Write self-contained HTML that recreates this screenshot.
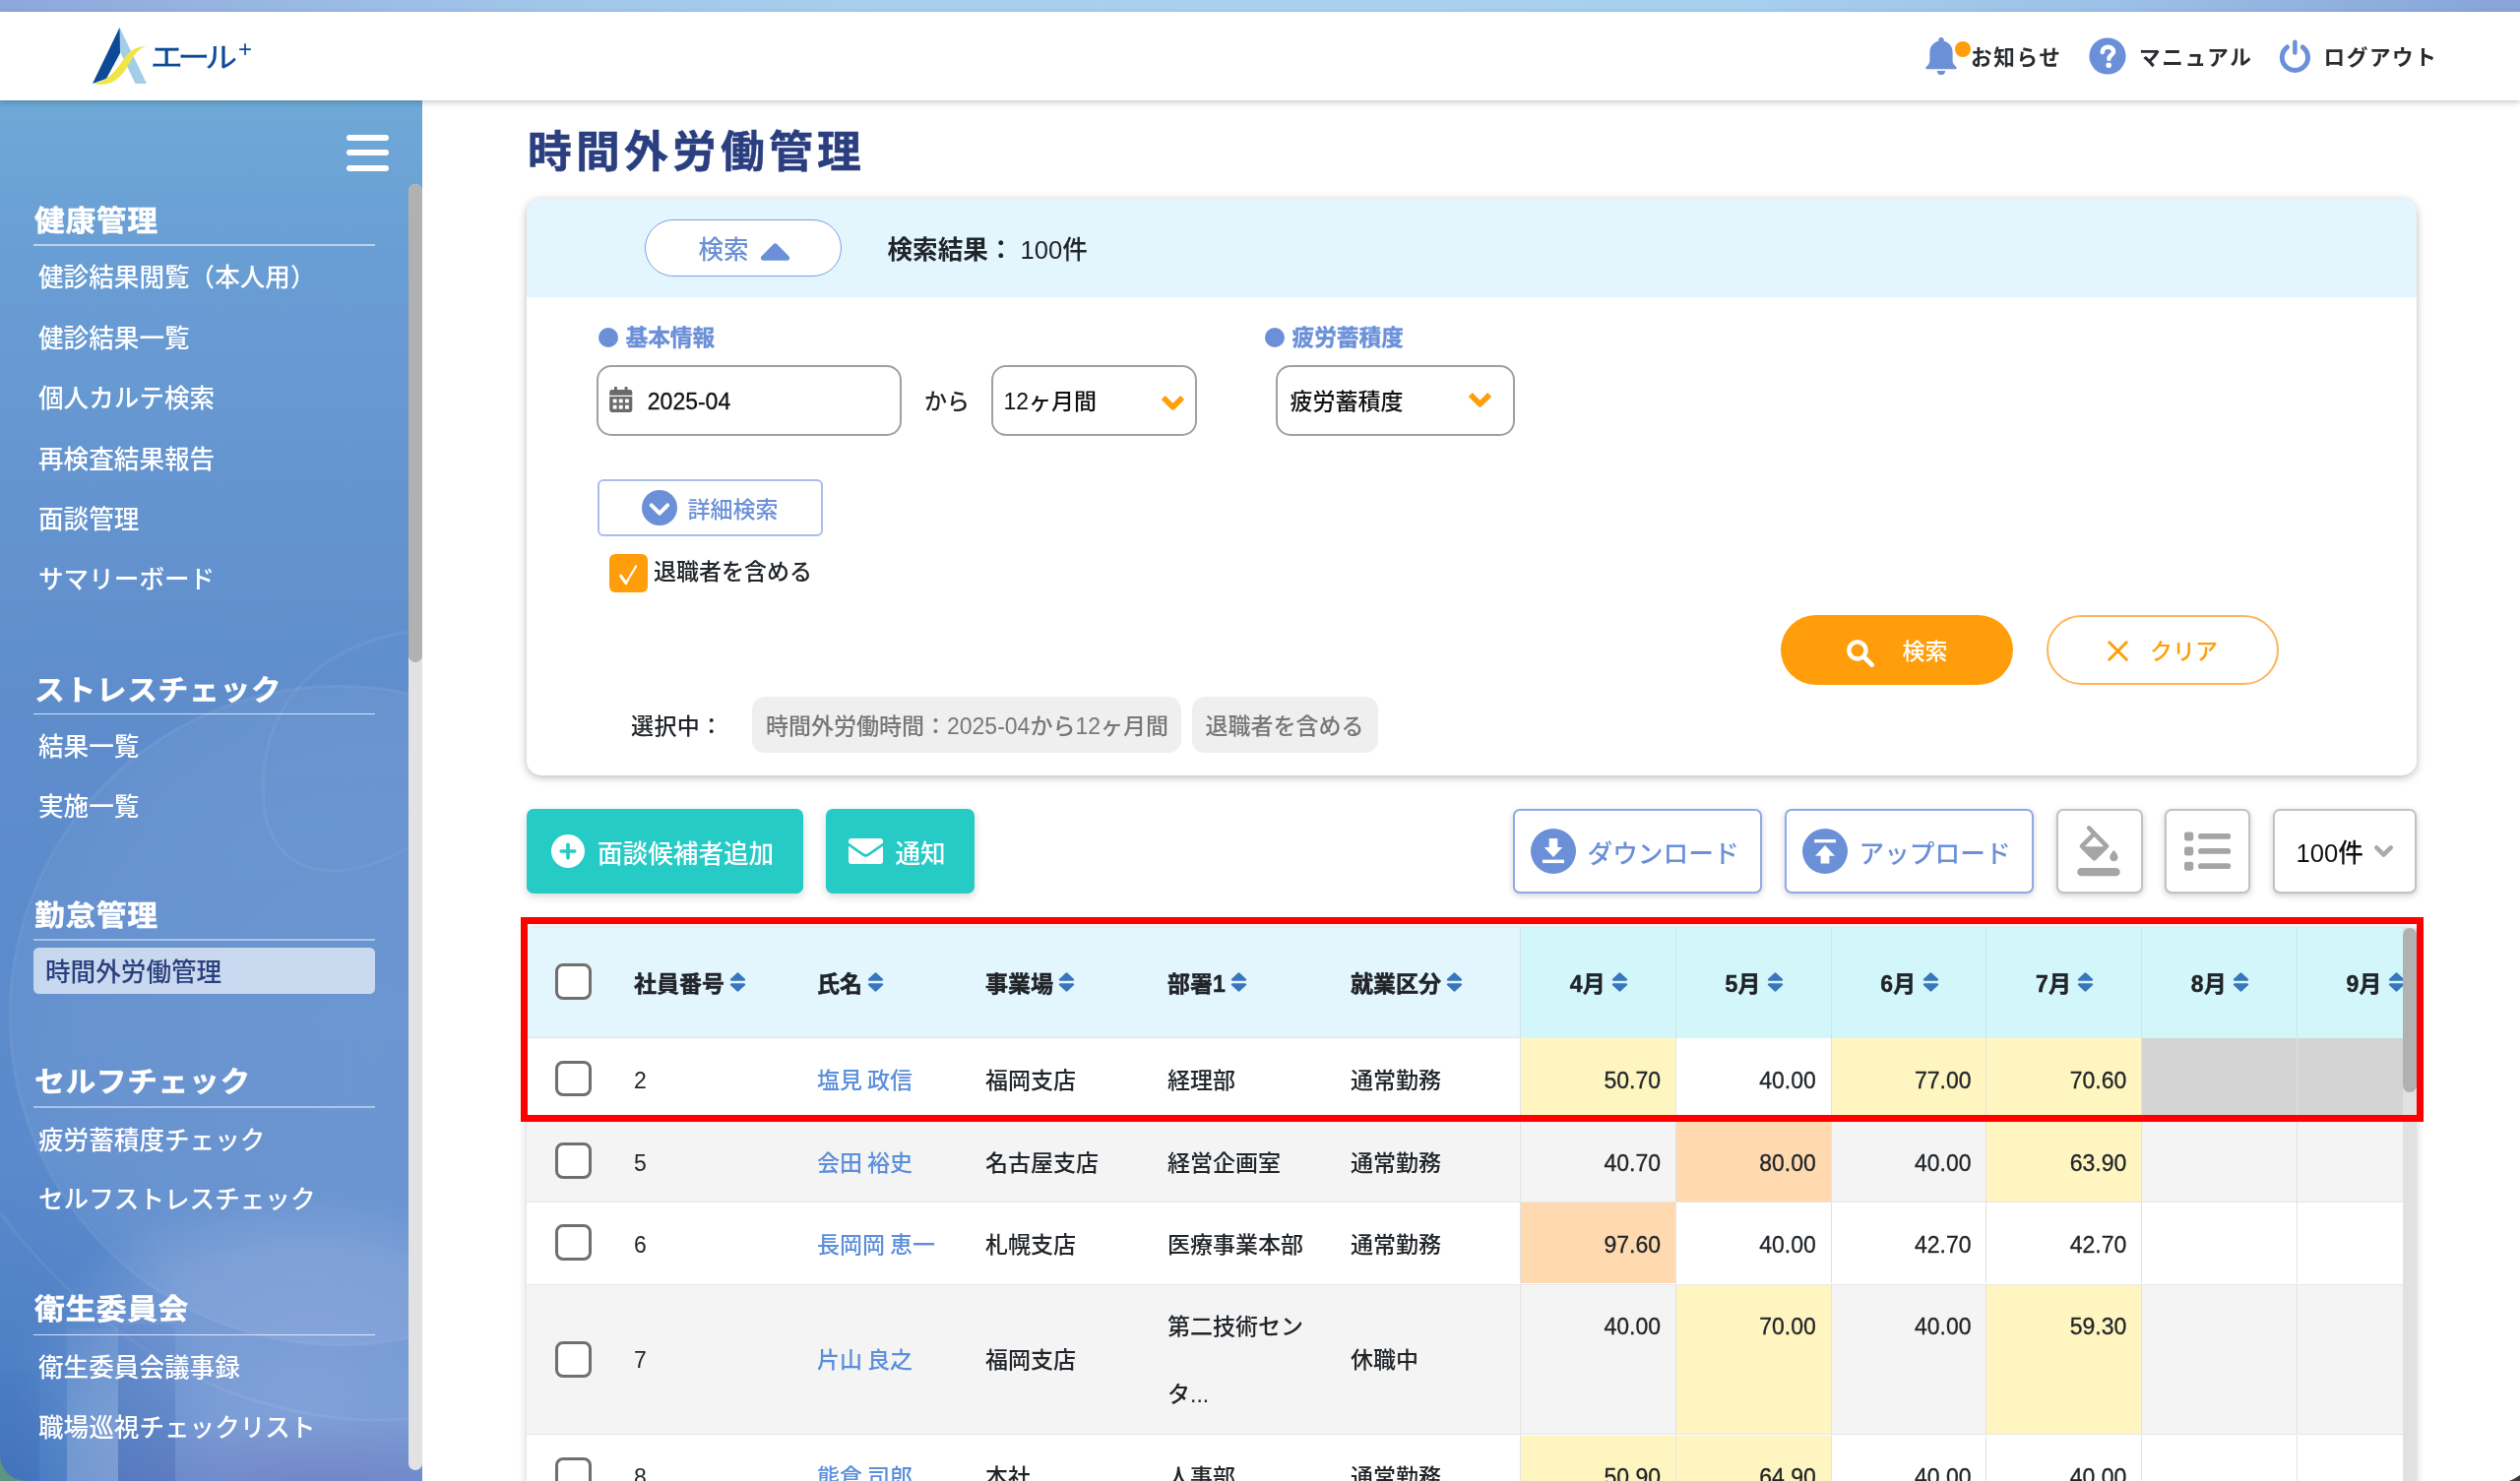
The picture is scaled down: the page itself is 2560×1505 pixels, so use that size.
<!DOCTYPE html>
<html lang="ja">
<head>
<meta charset="utf-8">
<title>時間外労働管理</title>
<style>
*{box-sizing:border-box;margin:0;padding:0}
html,body{width:2560px;height:1505px;overflow:hidden;background:#fff}
body{position:relative;font-family:"Liberation Sans","Noto Sans CJK JP",sans-serif;font-size:23px;font-weight:500;color:#212529;-webkit-font-smoothing:antialiased}
#app{position:absolute;left:0;top:0;width:2560px;height:1505px;overflow:hidden;will-change:transform}
.abs{position:absolute}
svg{display:block}
/* top strip */
#strip{position:absolute;left:0;top:0;width:2560px;height:12px;background:linear-gradient(90deg,#8da7dc 0%,#98b6e2 10%,#a2c6ea 22%,#a8d0ee 36%,#a9d1ef 55%,#a6ceee 70%,#9dc0e7 84%,#90afde 93%,#88a4d8 100%)}
/* header */
#header{position:absolute;left:0;top:12px;width:2560px;height:90px;background:#fff;box-shadow:0 2px 6px rgba(0,0,0,.22);z-index:5}
#logo{position:absolute;left:94px;top:16px}
#logotext{position:absolute;left:153px;top:25px;width:110px;height:44px;font-size:29px;font-weight:400;-webkit-text-stroke:.3px #0d4a96;line-height:44px;color:#0d4a96;white-space:nowrap}
#logotext span{position:absolute;left:0;top:0;display:block;transform-origin:0 50%;transform:scaleX(1.13);letter-spacing:-4.6px}
#logotext sup{position:absolute;left:89px;top:-2.2px;font-size:24px;font-weight:400;line-height:30px;-webkit-text-stroke:0}
.hnav{position:absolute;top:2px;height:90px;line-height:90px;font-size:21.6px;font-weight:700;color:#2a2d30;white-space:nowrap;letter-spacing:1.6px}
/* sidebar */
#side{position:absolute;left:0;top:102px;width:429px;height:1403px;overflow:hidden;color:#fff;
 background:linear-gradient(180deg,#6fa9d7 0%,#699ed4 11%,#6595d0 27%,#5f8dcc 44%,#5c8bcc 58%,#5b8acc 100%)}
#side .bgsvg{position:absolute;left:0;top:0}
#burger{position:absolute;left:352px;top:35px;width:43px;height:37px}
#burger i{position:absolute;left:0;width:43px;height:6px;border-radius:3px;background:#fff}
.sh{position:absolute;left:35px;font-size:30.8px;font-weight:700;-webkit-text-stroke:.4px #fff;line-height:39px;white-space:nowrap;letter-spacing:.6px;transform:scaleY(.945);transform-origin:0 55%}
.sl{position:absolute;left:34px;margin-top:-1px;width:347px;height:2px;background:rgba(255,255,255,.55)}
.si{position:absolute;left:39px;font-size:25.6px;line-height:40px;white-space:nowrap;font-weight:500}
.si.act{left:34px;width:347px;height:47px;line-height:50.5px;padding-left:12px;background:rgba(255,255,255,.64);color:#2a3f7d;border-radius:5.5px}
#strack{position:absolute;left:415px;top:85px;width:14px;height:1307px;background:#e2e2e2;border-radius:7px}
#sthumb{position:absolute;left:0;top:0;width:14px;height:486px;background:#b1b1b1;border-radius:7px}
/* main */
#title{position:absolute;left:536px;top:118px;font-size:44.8px;font-weight:700;line-height:72px;color:#2b3f80;-webkit-text-stroke:.5px #2b3f80;letter-spacing:4.2px;white-space:nowrap}
#card{position:absolute;left:535px;top:202px;width:1920px;height:586px;border-radius:15px;background:#fff;box-shadow:0 2px 9px rgba(0,0,0,.28)}
#cardhead{position:absolute;left:0;top:0;width:1920px;height:100px;background:#e3f5fd;border-radius:15px 15px 0 0}
#toggle{position:absolute;left:120px;top:21px;width:200px;height:58px;border:1.5px solid #7d9fe2;border-radius:29px;background:#fff}
#toggle span{position:absolute;left:53.5px;top:2px;line-height:56px;font-size:25.6px;color:#6b90d8}
#toggle svg{position:absolute;left:115.5px;top:23px}
#result{position:absolute;left:366.5px;top:23px;line-height:58px;font-size:25.6px;font-weight:700;color:#212529;white-space:nowrap}
#result b{font-weight:500}
.lab{position:absolute;font-size:22.7px;font-weight:700;color:#6b90d8;-webkit-text-stroke:.35px #6b90d8;line-height:30px;white-space:nowrap}
.lab i{position:absolute;left:-27.2px;top:5px;width:20px;height:20px;border-radius:50%;background:#6b90d8}
.inp{position:absolute;top:169px;height:71.5px;border:2px solid #a0a0a0;border-radius:15px;background:#fff;font-size:23px;line-height:72.5px;color:#111;white-space:nowrap}
.chip{position:absolute;top:506px;height:56.6px;line-height:61px;border-radius:13px;background:#efefef;color:#777;font-size:23px;padding:0 14px;white-space:nowrap}
.pill{position:absolute;top:423px;width:236px;height:71px;border-radius:36px;font-size:23px;line-height:71px;white-space:nowrap}
/* toolbar */
.tb{position:absolute;top:822px;height:86px;border-radius:7px;white-space:nowrap;font-size:25.6px;line-height:85px}
.teal{background:#26cbc6;color:#fff;font-weight:500;box-shadow:0 3px 8px rgba(0,0,0,.16)}
.outl{background:#fff;border:2px solid #8faae7;color:#6b90d8;box-shadow:0 2px 6px rgba(0,0,0,.18)}
.gry{background:#fff;border:2px solid #c2c2c2;color:#111;box-shadow:0 2px 6px rgba(0,0,0,.2)}
/* table */
#tbl{position:absolute;left:535px;top:943px;width:1920px;height:600px;background:#fff;box-shadow:0 0 9px rgba(0,0,0,.2);border-radius:6px 0 0 0;overflow:hidden}
.row{position:absolute;left:0;width:1906px;border-bottom:1.5px solid #e6e6e6}
.row.alt{background:#f4f4f4}
.row.hd{background:#e3f5fd;font-weight:700;color:#212529;-webkit-text-stroke:.45px #212529;border-bottom:1.5px solid #e0e6ea}
.c{position:absolute;top:0;height:100%;white-space:nowrap}
.t{position:absolute;left:0;line-height:40px;white-space:nowrap}
.m{position:absolute;top:0;width:158px;border-left:1.5px solid #e2e2e2}
.row.hd .m{background:#d3f6fa;border-left:1.5px solid #cfe3e6}
.m .v{position:absolute;right:15px;line-height:40px;color:#212529;-webkit-text-stroke:.3px #212529}
.num{-webkit-text-stroke:.3px currentColor}
.m .h{position:absolute;left:1px;width:100%;text-align:center;line-height:40px;padding-right:0}
.y{background:#fff5c0}.o{background:#ffdab0}.g{background:#d4d4d4}
.cb{position:absolute;left:29px;width:36.5px;height:36.5px;border:3px solid #6f6f6f;border-radius:8px;background:#fff}
a.n{color:#5b8edb;text-decoration:none;word-spacing:-1.3px}
.so{display:inline-block;vertical-align:middle;margin-left:5px;position:relative;top:-3.5px}
.m .so{margin-left:6.5px}
#ttrack{position:absolute;left:1906px;top:0;width:14px;height:600px;background:#e1e1e1}
#tthumb{position:absolute;left:0;top:0;width:14px;height:167px;background:#b1b1b1;border-radius:7px}
#red{position:absolute;left:529px;top:932px;width:1933px;height:208px;border:7px solid #ff0000;z-index:9}
</style>
</head>
<body>
<div id="app">
<div id="strip"></div>

<div id="header">
  <svg id="logo" width="56" height="60" viewBox="0 0 56 60">
    <path d="M27.5 0 L55 57 L43.5 57 L22 12 Z" fill="#a3cde8"/>
    <path d="M27.5 0 L28 26 L14 52 L0 57 Z" fill="#0d4a96"/>
    <path d="M1 57 C14 55 24 44 31 33 C36 25 42 19.5 54.5 19 C46 22 42 28 37 37 C30 50 20 61 1 57 Z" fill="#f0e545"/>
  </svg>
  <div id="logotext"><span>エール</span><sup>+</sup></div>

  <svg class="abs" style="left:1956px;top:26px" width="32" height="38" viewBox="0 0 32 38">
    <path d="M16 0 a2.7 2.7 0 0 1 2.7 2.7 v1.1 C24 5 27.6 9.6 27.6 15 v8.5 c0 2.6 1.3 4.5 3.7 6.6 c.9 .8 .4 2.2 -1 2.2 H1.7 c-1.4 0 -1.9 -1.4 -1 -2.2 C3.1 28 4.4 26.1 4.4 23.5 V15 C4.4 9.6 8 5 13.3 3.8 V2.7 A2.7 2.7 0 0 1 16 0 Z" fill="#6b90d8"/>
    <path d="M11.800 34 h8.400 a4.200 4.200 0 0 1 -8.400 0 Z" fill="#6b90d8"/>
  </svg>
  <div class="abs" style="left:1986px;top:29.500px;width:16px;height:16px;border-radius:50%;background:#ff9e0a"></div>
  <div class="hnav" style="left:2002px">お知らせ</div>

  <svg class="abs" style="left:2121.5px;top:25.5px" width="38" height="38" viewBox="0 0 38 38">
    <circle cx="19" cy="19" r="18.600" fill="#6b90d8"/>
    <path d="M13.8 15 C13.8 11.6 16.2 9.7 19.4 9.7 C22.6 9.7 25 11.5 25 14.4 C25 18.2 20.4 18 20.4 21.8" fill="none" stroke="#fff" stroke-width="4.5" stroke-linecap="round"/>
    <circle cx="20.2" cy="28.3" r="2.8" fill="#fff"/>
  </svg>
  <div class="hnav" style="left:2173px">マニュアル</div>

  <svg class="abs" style="left:2315px;top:27px" width="33" height="36" viewBox="0 0 33 36">
    <path d="M8.5 8.9 A13.1 13.1 0 1 0 24.3 8.9" fill="none" stroke="#6b90d8" stroke-width="5" stroke-linecap="round"/>
    <path d="M16.4 3.8 V14.4" fill="none" stroke="#6b90d8" stroke-width="4.5" stroke-linecap="round"/>
  </svg>
  <div class="hnav" style="left:2360.5px">ログアウト</div>
</div>

<div id="side">
  <svg class="bgsvg" width="429" height="1403" viewBox="0 0 429 1403">
    <defs>
      <radialGradient id="gl" cx="55%" cy="55%" r="60%">
        <stop offset="0" stop-color="#fff" stop-opacity=".1"/>
        <stop offset=".75" stop-color="#fff" stop-opacity=".07"/>
        <stop offset="1" stop-color="#fff" stop-opacity=".035"/>
      </radialGradient>
      <radialGradient id="g2" cx="50%" cy="50%" r="50%">
        <stop offset="0" stop-color="#c9cdf0" stop-opacity=".34"/>
        <stop offset=".7" stop-color="#c9cdf0" stop-opacity=".22"/>
        <stop offset="1" stop-color="#c9cdf0" stop-opacity="0"/>
      </radialGradient>
      <radialGradient id="pu" cx="50%" cy="50%" r="50%">
        <stop offset="0" stop-color="#6c6bb3" stop-opacity=".5"/>
        <stop offset="1" stop-color="#6c6bb3" stop-opacity="0"/>
      </radialGradient>
      <radialGradient id="dk" cx="50%" cy="50%" r="50%">
        <stop offset="0" stop-color="#2f6ab8" stop-opacity=".5"/>
        <stop offset="1" stop-color="#2f6ab8" stop-opacity="0"/>
      </radialGradient>
      <linearGradient id="b1" x1="0" y1="0" x2="0" y2="1">
        <stop offset="0" stop-color="#fff" stop-opacity=".04"/>
        <stop offset="1" stop-color="#fff" stop-opacity=".2"/>
      </linearGradient>
      <linearGradient id="b2" x1="0" y1="0" x2="0" y2="1">
        <stop offset="0" stop-color="#3f64b0" stop-opacity=".1"/>
        <stop offset="1" stop-color="#3f64b0" stop-opacity=".42"/>
      </linearGradient>
    </defs>
    <circle cx="345" cy="930" r="335" fill="url(#gl)"/>
    <circle cx="345" cy="930" r="335" fill="none" stroke="#fff" stroke-opacity=".06" stroke-width="3"/>
    <path d="M414 540 C300 560 255 640 270 730 C290 800 360 790 414 760" fill="none" stroke="#fff" stroke-opacity=".06" stroke-width="3"/>
    <ellipse cx="310" cy="1320" rx="300" ry="215" fill="url(#g2)"/>
    <path d="M0 1130 C120 1290 280 1350 414 1340" fill="none" stroke="#fff" stroke-opacity=".07" stroke-width="3"/>
    <ellipse cx="0" cy="1403" rx="230" ry="340" fill="url(#dk)"/>
    <rect x="68" y="1248" width="52" height="155" fill="url(#b1)"/>
    <rect x="120" y="1244" width="58" height="159" fill="url(#b2)"/>
    <rect x="0" y="1290" width="40" height="113" fill="url(#b2)" opacity=".8"/>
    <ellipse cx="330" cy="1410" rx="300" ry="75" fill="url(#pu)"/>
  </svg>
  <div id="burger"><i style="top:0"></i><i style="top:15px"></i><i style="top:30.500px"></i></div>

  <div class="sh" style="top:103px">健康管理</div>
  <div class="sl" style="top:147px"></div>
  <div class="si" style="top:160px">健診結果閲覧（本人用）</div>
  <div class="si" style="top:221.500px">健診結果一覧</div>
  <div class="si" style="top:283px">個人カルテ検索</div>
  <div class="si" style="top:344.500px">再検査結果報告</div>
  <div class="si" style="top:405.500px">面談管理</div>
  <div class="si" style="top:466.500px">サマリーボード</div>

  <div class="sh" style="top:580px">ストレスチェック</div>
  <div class="sl" style="top:623.5px;height:1px;background:rgba(255,255,255,.75)"></div>
  <div class="si" style="top:637px">結果一覧</div>
  <div class="si" style="top:697.500px">実施一覧</div>

  <div class="sh" style="top:808.7px">勤怠管理</div>
  <div class="sl" style="top:853px;background:rgba(255,255,255,.45)"></div>
  <div class="si act" style="top:861px">時間外労働管理</div>

  <div class="sh" style="top:978px">セルフチェック</div>
  <div class="sl" style="top:1023px;background:rgba(255,255,255,.45)"></div>
  <div class="si" style="top:1036.500px">疲労蓄積度チェック</div>
  <div class="si" style="top:1097px">セルフストレスチェック</div>

  <div class="sh" style="top:1209px">衛生委員会</div>
  <div class="sl" style="top:1254.5px;height:1px;background:rgba(255,255,255,.75)"></div>
  <div class="si" style="top:1267.500px">衛生委員会議事録</div>
  <div class="si" style="top:1329px">職場巡視チェックリスト</div>

  <div id="strack"><div id="sthumb"></div></div>
</div>

<div id="title">時間外労働管理</div>

<div id="card">
  <div id="cardhead">
    <div id="toggle"><span>検索</span>
      <svg width="31" height="18" viewBox="0 0 31 19" preserveAspectRatio="none"><path d="M13.300 1.500 a3 3 0 0 1 4.400 0 L29.500 14.200 a2.800 2.800 0 0 1 -2.100 4.600 H3.600 a2.800 2.800 0 0 1 -2.100 -4.600 Z" fill="#6b90d8"/></svg>
    </div>
    <div id="result">検索結果： <b>100件</b></div>
  </div>

  <div class="lab" style="left:100.5px;top:126.2px"><i></i>基本情報</div>
  <div class="inp" style="left:71.3px;width:309.7px">
    <svg class="abs" style="left:11px;top:20px" width="23.5" height="26" viewBox="0 0 24 27">
      <path d="M5 0 h3 v3 h8 v-3 h3 v3 h2.500 a2.500 2.500 0 0 1 2.500 2.500 V9 H0 V5.500 A2.500 2.500 0 0 1 2.500 3 H5 Z M0 10.500 H24 V24.500 a2.500 2.500 0 0 1 -2.500 2.500 H2.500 A2.500 2.500 0 0 1 0 24.500 Z" fill="#6a6a6a"/>
      <g fill="#fff"><rect x="3.600" y="13" width="4" height="4"/><rect x="10" y="13" width="4" height="4"/><rect x="16.400" y="13" width="4" height="4"/><rect x="3.600" y="19.500" width="4" height="4"/><rect x="10" y="19.500" width="4" height="4"/><rect x="16.400" y="19.500" width="4" height="4"/></g>
    </svg>
    <span class="abs num" style="left:49.5px;top:-1.5px">2025-04</span>
  </div>
  <div class="abs" style="left:404px;top:169px;line-height:75.5px;font-size:23px">から</div>
  <div class="inp" style="left:472px;width:209px">
    <span class="abs" style="left:10.5px;top:-1.5px">12ヶ月間</span>
    <svg class="abs" style="left:170px;top:28px" width="25" height="17" viewBox="0 0 25 17"><path d="M2.8 3 L12.5 12.7 L22.2 3" fill="none" stroke="#ff9e0a" stroke-width="5.6" stroke-linejoin="round"/></svg>
  </div>

  <div class="lab" style="left:777.5px;top:126.2px"><i></i>疲労蓄積度</div>
  <div class="inp" style="left:761px;width:243px">
    <span class="abs" style="left:12.5px;top:-1.5px">疲労蓄積度</span>
    <svg class="abs" style="left:192.5px;top:25px" width="25" height="17" viewBox="0 0 25 17"><path d="M2.8 3 L12.5 12.7 L22.2 3" fill="none" stroke="#ff9e0a" stroke-width="5.6" stroke-linejoin="round"/></svg>
  </div>

  <div class="abs" style="left:71.5px;top:285px;width:229px;height:58px;border:2px solid #a9beea;border-radius:6px;background:#fff">
    <svg class="abs" style="left:43px;top:9px" width="36" height="36" viewBox="0 0 36 36"><circle cx="18" cy="18" r="18" fill="#6b90d8"/><path d="M9.800 15.400 L18 23.600 L26.200 15.400" fill="none" stroke="#fff" stroke-width="4" stroke-linecap="round" stroke-linejoin="round"/></svg>
    <span class="abs" style="left:90px;top:1px;line-height:57px;color:#6b90d8;white-space:nowrap">詳細検索</span>
  </div>

  <div class="abs" style="left:83.500px;top:360.5px;width:39.5px;height:39.5px;border-radius:6px;background:#ff9e0a">
    <svg width="40" height="40" viewBox="0 0 40 40"><path d="M11.600 22.200 L16.900 29.600 L27.200 12.300" fill="none" stroke="#fff" stroke-width="2.100" stroke-linecap="round" stroke-linejoin="round"/><path d="M11.600 22.200 L16.900 29.600" fill="none" stroke="#fff" stroke-width="3" stroke-linecap="round"/></svg>
  </div>
  <div class="abs" style="left:129px;top:360px;line-height:38px;white-space:nowrap">退職者を含める</div>

  <div class="pill" style="left:1274px;background:#ff9e0a;color:#fff;font-weight:500">
    <svg class="abs" style="left:66.5px;top:24.5px" width="28.5" height="28.5" viewBox="0 0 30 30"><circle cx="11.500" cy="11.500" r="9" fill="none" stroke="#fff" stroke-width="4.600"/><path d="M18.500 18.500 L27 27" stroke="#fff" stroke-width="5" stroke-linecap="round"/></svg>
    <span class="abs" style="left:123.5px;top:2px">検索</span>
  </div>
  <div class="pill" style="left:1544px;background:#fff;border:2px solid #ffb458;color:#ff9e0a;line-height:67px">
    <svg class="abs" style="left:59.5px;top:23.5px" width="21" height="21" viewBox="0 0 24 24"><path d="M2 2 L22 22 M22 2 L2 22" stroke="#ff9e0a" stroke-width="3.4" stroke-linecap="round"/></svg>
    <span class="abs" style="left:103px;top:2px">クリア</span>
  </div>

  <div class="abs" style="left:106px;top:508px;line-height:56px;white-space:nowrap;letter-spacing:.4px">選択中：</div>
  <div class="chip" style="left:229px;width:435.5px">時間外労働時間：2025-04から12ヶ月間</div>
  <div class="chip" style="left:675.5px">退職者を含める</div>
</div>

<!-- toolbar -->
<div class="tb teal" style="left:535px;width:280.6px">
  <svg class="abs" style="left:25px;top:26px" width="34" height="34" viewBox="0 0 34 34"><circle cx="17" cy="17" r="17" fill="#fff"/><path d="M17 10.3 V23.7 M10.3 17 H23.7" stroke="#26cbc6" stroke-width="3.7" stroke-linecap="round"/></svg>
  <span class="abs" style="left:72px;top:4.3px">面談候補者追加</span>
</div>
<div class="tb teal" style="left:838.5px;width:151.7px">
  <svg class="abs" style="left:23px;top:30px" width="35" height="26" viewBox="0 0 35 26"><path d="M3 0 H32 a3 3 0 0 1 3 3 V4.500 L19.600 15.200 a3.600 3.600 0 0 1 -4.200 0 L0 4.500 V3 A3 3 0 0 1 3 0 Z" fill="#fff"/><path d="M0 7.700 L14 17.400 a6 6 0 0 0 7 0 L35 7.700 V23 a3 3 0 0 1 -3 3 H3 a3 3 0 0 1 -3 -3 Z" fill="#fff"/></svg>
  <span class="abs" style="left:71px;top:4.3px">通知</span>
</div>

<div class="tb outl" style="left:1537px;width:253px">
  <svg class="abs" style="left:16px;top:18.4px" width="46" height="46" viewBox="0 0 46 46"><circle cx="23" cy="23" r="23" fill="#6b90d8"/><path d="M18.7 10.1 h8.6 v9 h5 L23 29.1 L13.7 19.1 h5 Z" fill="#fff"/><rect x="12" y="31.6" width="22" height="3.5" fill="#fff"/></svg>
  <span class="abs" style="left:73.5px;top:1.7px;font-size:25.7px">ダウンロード</span>
</div>
<div class="tb outl" style="left:1813px;width:253px">
  <svg class="abs" style="left:16px;top:18.4px" width="46" height="46" viewBox="0 0 46 46"><circle cx="23" cy="23" r="23" fill="#6b90d8"/><rect x="12.1" y="11" width="21.8" height="3.3" fill="#fff"/><path d="M23 17 L33 27.7 h-5.6 v7.9 h-8.8 v-7.9 H13 Z" fill="#fff"/></svg>
  <span class="abs" style="left:73.5px;top:1.7px;font-size:25.7px">アップロード</span>
</div>
<div class="tb gry" style="left:2089px;width:88px">
  <svg class="abs" style="left:19px;top:15px" width="46" height="53" viewBox="0 0 46 53">
    <path d="M12.3 2.5 L30 20.8 L17.5 33.4 L5 20.8 L17.6 8.2" fill="none" stroke="#a5a5a5" stroke-width="4.6" stroke-linecap="round" stroke-linejoin="round"/>
    <path d="M5.5 21.3 H29.5 L17.5 33.4 Z" fill="#a5a5a5"/>
    <path d="M37.4 24.8 c2.600 3.400 4.200 5.600 4.200 7.300 a4.200 4.200 0 0 1 -8.400 0 c0 -1.700 1.600 -3.900 4.200 -7.300 Z" fill="#a5a5a5"/>
    <rect x="0.2" y="43" width="43.5" height="8.3" rx="4.15" fill="#a5a5a5"/>
  </svg>
</div>
<div class="tb gry" style="left:2199px;width:87px">
  <svg class="abs" style="left:18px;top:21px" width="49" height="40.3" viewBox="0 0 49 41" preserveAspectRatio="none">
    <g fill="#a5a5a5"><rect x="0" y="0.4" width="9.2" height="9.2" rx="2.4"/><rect x="0" y="15.7" width="9.2" height="9.2" rx="2.4"/><rect x="0" y="31.2" width="9.2" height="9.2" rx="2.4"/>
    <rect x="14" y="2.1" width="33.2" height="5.8" rx="2.9"/><rect x="14" y="17.4" width="33.2" height="5.8" rx="2.9"/><rect x="14" y="32.900" width="33.2" height="5.8" rx="2.9"/></g>
  </svg>
</div>
<div class="tb gry" style="left:2309px;width:146px">
  <span class="abs" style="left:21.5px;top:1px">100件</span>
  <svg class="abs" style="left:101px;top:35px" width="19" height="12.5" viewBox="0 0 19 12.5"><path d="M2.300 2.400 L9.500 9.600 L16.700 2.400" fill="none" stroke="#aaaaaa" stroke-width="4.400" stroke-linecap="round" stroke-linejoin="round"/></svg>
</div>

<!-- table -->
<div id="tbl">
  <div class="row hd" style="top:0;height:111.500px">
    <div class="cb" style="top:36px"></div>
    <div class="c" style="left:109px"><span class="t" style="top:36.7px">社員番号<svg class="so" width="17" height="20" viewBox="0 0 16 20" preserveAspectRatio="none"><path d="M6.9 .9 a1.5 1.5 0 0 1 2.2 0 L14.9 6.7 a1.200 1.200 0 0 1 -.9 2 H2 a1.200 1.200 0 0 1 -.9 -2 Z M6.9 19.1 a1.5 1.5 0 0 0 2.2 0 L14.9 13.300 a1.200 1.200 0 0 0 -.9 -2 H2 a1.200 1.200 0 0 0 -.9 2 Z" fill="#3876be"/></svg></span></div>
    <div class="c" style="left:295px"><span class="t" style="top:36.7px">氏名<svg class="so" width="17" height="20" viewBox="0 0 16 20" preserveAspectRatio="none"><path d="M6.9 .9 a1.5 1.5 0 0 1 2.2 0 L14.9 6.7 a1.200 1.200 0 0 1 -.9 2 H2 a1.200 1.200 0 0 1 -.9 -2 Z M6.9 19.1 a1.5 1.5 0 0 0 2.2 0 L14.9 13.300 a1.200 1.200 0 0 0 -.9 -2 H2 a1.200 1.200 0 0 0 -.9 2 Z" fill="#3876be"/></svg></span></div>
    <div class="c" style="left:466px"><span class="t" style="top:36.7px">事業場<svg class="so" width="17" height="20" viewBox="0 0 16 20" preserveAspectRatio="none"><path d="M6.9 .9 a1.5 1.5 0 0 1 2.2 0 L14.9 6.7 a1.200 1.200 0 0 1 -.9 2 H2 a1.200 1.200 0 0 1 -.9 -2 Z M6.9 19.1 a1.5 1.5 0 0 0 2.2 0 L14.9 13.300 a1.200 1.200 0 0 0 -.9 -2 H2 a1.200 1.200 0 0 0 -.9 2 Z" fill="#3876be"/></svg></span></div>
    <div class="c" style="left:651px"><span class="t" style="top:36.7px">部署1<svg class="so" width="17" height="20" viewBox="0 0 16 20" preserveAspectRatio="none"><path d="M6.9 .9 a1.5 1.5 0 0 1 2.2 0 L14.9 6.7 a1.200 1.200 0 0 1 -.9 2 H2 a1.200 1.200 0 0 1 -.9 -2 Z M6.9 19.1 a1.5 1.5 0 0 0 2.2 0 L14.9 13.300 a1.200 1.200 0 0 0 -.9 -2 H2 a1.200 1.200 0 0 0 -.9 2 Z" fill="#3876be"/></svg></span></div>
    <div class="c" style="left:837px"><span class="t" style="top:36.7px">就業区分<svg class="so" width="17" height="20" viewBox="0 0 16 20" preserveAspectRatio="none"><path d="M6.9 .9 a1.5 1.5 0 0 1 2.2 0 L14.9 6.7 a1.200 1.200 0 0 1 -.9 2 H2 a1.200 1.200 0 0 1 -.9 -2 Z M6.9 19.1 a1.5 1.5 0 0 0 2.2 0 L14.9 13.300 a1.200 1.200 0 0 0 -.9 -2 H2 a1.200 1.200 0 0 0 -.9 2 Z" fill="#3876be"/></svg></span></div>
    <div class="m" style="left:1009px;height:111.500px"><span class="h" style="top:36.7px">4月<svg class="so" width="17" height="20" viewBox="0 0 16 20" preserveAspectRatio="none"><path d="M6.9 .9 a1.5 1.5 0 0 1 2.2 0 L14.9 6.7 a1.200 1.200 0 0 1 -.9 2 H2 a1.200 1.200 0 0 1 -.9 -2 Z M6.9 19.1 a1.5 1.5 0 0 0 2.2 0 L14.9 13.300 a1.200 1.200 0 0 0 -.9 -2 H2 a1.200 1.200 0 0 0 -.9 2 Z" fill="#3876be"/></svg></span></div>
    <div class="m" style="left:1166.75px;height:111.500px"><span class="h" style="top:36.7px">5月<svg class="so" width="17" height="20" viewBox="0 0 16 20" preserveAspectRatio="none"><path d="M6.9 .9 a1.5 1.5 0 0 1 2.2 0 L14.9 6.7 a1.200 1.200 0 0 1 -.9 2 H2 a1.200 1.200 0 0 1 -.9 -2 Z M6.9 19.1 a1.5 1.5 0 0 0 2.2 0 L14.9 13.300 a1.200 1.200 0 0 0 -.9 -2 H2 a1.200 1.200 0 0 0 -.9 2 Z" fill="#3876be"/></svg></span></div>
    <div class="m" style="left:1324.5px;height:111.500px"><span class="h" style="top:36.7px">6月<svg class="so" width="17" height="20" viewBox="0 0 16 20" preserveAspectRatio="none"><path d="M6.9 .9 a1.5 1.5 0 0 1 2.2 0 L14.9 6.7 a1.200 1.200 0 0 1 -.9 2 H2 a1.200 1.200 0 0 1 -.9 -2 Z M6.9 19.1 a1.5 1.5 0 0 0 2.2 0 L14.9 13.300 a1.200 1.200 0 0 0 -.9 -2 H2 a1.200 1.200 0 0 0 -.9 2 Z" fill="#3876be"/></svg></span></div>
    <div class="m" style="left:1482.25px;height:111.500px"><span class="h" style="top:36.7px">7月<svg class="so" width="17" height="20" viewBox="0 0 16 20" preserveAspectRatio="none"><path d="M6.9 .9 a1.5 1.5 0 0 1 2.2 0 L14.9 6.7 a1.200 1.200 0 0 1 -.9 2 H2 a1.200 1.200 0 0 1 -.9 -2 Z M6.9 19.1 a1.5 1.5 0 0 0 2.2 0 L14.9 13.300 a1.200 1.200 0 0 0 -.9 -2 H2 a1.200 1.200 0 0 0 -.9 2 Z" fill="#3876be"/></svg></span></div>
    <div class="m" style="left:1640px;height:111.500px"><span class="h" style="top:36.7px">8月<svg class="so" width="17" height="20" viewBox="0 0 16 20" preserveAspectRatio="none"><path d="M6.9 .9 a1.5 1.5 0 0 1 2.2 0 L14.9 6.7 a1.200 1.200 0 0 1 -.9 2 H2 a1.200 1.200 0 0 1 -.9 -2 Z M6.9 19.1 a1.5 1.5 0 0 0 2.2 0 L14.9 13.300 a1.200 1.200 0 0 0 -.9 -2 H2 a1.200 1.200 0 0 0 -.9 2 Z" fill="#3876be"/></svg></span></div>
    <div class="m" style="left:1797.75px;height:111.500px"><span class="h" style="top:36.7px">9月<svg class="so" width="17" height="20" viewBox="0 0 16 20" preserveAspectRatio="none"><path d="M6.9 .9 a1.5 1.5 0 0 1 2.2 0 L14.9 6.7 a1.200 1.200 0 0 1 -.9 2 H2 a1.200 1.200 0 0 1 -.9 -2 Z M6.9 19.1 a1.5 1.5 0 0 0 2.2 0 L14.9 13.300 a1.200 1.200 0 0 0 -.9 -2 H2 a1.200 1.200 0 0 0 -.9 2 Z" fill="#3876be"/></svg></span></div>
  </div>

  <div class="row" style="top:111.500px;height:83.500px">
    <div class="cb" style="top:23px"></div>
    <div class="c" style="left:109px"><span class="t" style="top:23.5px">2</span></div>
    <div class="c" style="left:295px"><span class="t" style="top:23.5px"><a class="n">塩見 政信</a></span></div>
    <div class="c" style="left:466px"><span class="t" style="top:23.5px">福岡支店</span></div>
    <div class="c" style="left:651px"><span class="t" style="top:23.5px">経理部</span></div>
    <div class="c" style="left:837px"><span class="t" style="top:23.5px">通常勤務</span></div>
    <div class="m y" style="left:1009px;height:82px"><span class="v" style="top:23.5px">50.70</span></div>
    <div class="m" style="left:1166.75px;height:82px"><span class="v" style="top:23.5px">40.00</span></div>
    <div class="m y" style="left:1324.5px;height:82px"><span class="v" style="top:23.5px">77.00</span></div>
    <div class="m y" style="left:1482.25px;height:82px"><span class="v" style="top:23.5px">70.60</span></div>
    <div class="m g" style="left:1640px;height:82px"></div>
    <div class="m g" style="left:1797.75px;height:82px"></div>
  </div>

  <div class="row alt" style="top:195px;height:84.3px">
    <div class="cb" style="top:23px"></div>
    <div class="c" style="left:109px"><span class="t" style="top:23.5px">5</span></div>
    <div class="c" style="left:295px"><span class="t" style="top:23.5px"><a class="n">会田 裕史</a></span></div>
    <div class="c" style="left:466px"><span class="t" style="top:23.5px">名古屋支店</span></div>
    <div class="c" style="left:651px"><span class="t" style="top:23.5px">経営企画室</span></div>
    <div class="c" style="left:837px"><span class="t" style="top:23.5px">通常勤務</span></div>
    <div class="m" style="left:1009px;height:82.8px"><span class="v" style="top:23.5px">40.70</span></div>
    <div class="m o" style="left:1166.75px;height:82.8px"><span class="v" style="top:23.5px">80.00</span></div>
    <div class="m" style="left:1324.5px;height:82.8px"><span class="v" style="top:23.5px">40.00</span></div>
    <div class="m y" style="left:1482.25px;height:82.8px"><span class="v" style="top:23.5px">63.90</span></div>
    <div class="m" style="left:1640px;height:82.8px"></div>
    <div class="m" style="left:1797.75px;height:82.8px"></div>
  </div>

  <div class="row" style="top:279.3px;height:83.4px">
    <div class="cb" style="top:22.2px"></div>
    <div class="c" style="left:109px"><span class="t" style="top:22.7px">6</span></div>
    <div class="c" style="left:295px"><span class="t" style="top:22.7px"><a class="n">長岡岡 恵一</a></span></div>
    <div class="c" style="left:466px"><span class="t" style="top:22.7px">札幌支店</span></div>
    <div class="c" style="left:651px"><span class="t" style="top:22.7px">医療事業本部</span></div>
    <div class="c" style="left:837px"><span class="t" style="top:22.7px">通常勤務</span></div>
    <div class="m o" style="left:1009px;height:81.9px"><span class="v" style="top:22.7px">97.60</span></div>
    <div class="m" style="left:1166.75px;height:81.9px"><span class="v" style="top:22.7px">40.00</span></div>
    <div class="m" style="left:1324.5px;height:81.9px"><span class="v" style="top:22.7px">42.70</span></div>
    <div class="m" style="left:1482.25px;height:81.9px"><span class="v" style="top:22.7px">42.70</span></div>
    <div class="m" style="left:1640px;height:81.9px"></div>
    <div class="m" style="left:1797.75px;height:81.9px"></div>
  </div>

  <div class="row alt" style="top:362.7px;height:152.8px">
    <div class="cb" style="top:57.5px"></div>
    <div class="c" style="left:109px"><span class="t" style="top:56.5px">7</span></div>
    <div class="c" style="left:295px"><span class="t" style="top:56.5px"><a class="n">片山 良之</a></span></div>
    <div class="c" style="left:466px"><span class="t" style="top:56.5px">福岡支店</span></div>
    <div class="c" style="left:651px"><span class="t" style="top:8.8px;width:150px;white-space:normal;word-break:break-all;line-height:68.8px">第二技術センタ...</span></div>
    <div class="c" style="left:837px"><span class="t" style="top:56.5px">休職中</span></div>
    <div class="m" style="left:1009px;height:151.3px"><span class="v" style="top:22px">40.00</span></div>
    <div class="m y" style="left:1166.75px;height:151.3px"><span class="v" style="top:22px">70.00</span></div>
    <div class="m" style="left:1324.5px;height:151.3px"><span class="v" style="top:22px">40.00</span></div>
    <div class="m y" style="left:1482.25px;height:151.3px"><span class="v" style="top:22px">59.30</span></div>
    <div class="m" style="left:1640px;height:151.3px"></div>
    <div class="m" style="left:1797.75px;height:151.3px"></div>
  </div>

  <div class="row" style="top:515.5px;height:83.5px">
    <div class="cb" style="top:22.2px"></div>
    <div class="c" style="left:109px"><span class="t" style="top:22.7px">8</span></div>
    <div class="c" style="left:295px"><span class="t" style="top:22.7px"><a class="n">熊倉 司郎</a></span></div>
    <div class="c" style="left:466px"><span class="t" style="top:22.7px">本社</span></div>
    <div class="c" style="left:651px"><span class="t" style="top:22.7px">人事部</span></div>
    <div class="c" style="left:837px"><span class="t" style="top:22.7px">通常勤務</span></div>
    <div class="m y" style="left:1009px;height:82px"><span class="v" style="top:22.7px">50.90</span></div>
    <div class="m y" style="left:1166.75px;height:82px"><span class="v" style="top:22.7px">64.90</span></div>
    <div class="m" style="left:1324.5px;height:82px"><span class="v" style="top:22.7px">40.00</span></div>
    <div class="m" style="left:1482.25px;height:82px"><span class="v" style="top:22.7px">40.00</span></div>
    <div class="m" style="left:1640px;height:82px"></div>
    <div class="m" style="left:1797.75px;height:82px"></div>
  </div>

  <div id="ttrack"><div id="tthumb"></div></div>
</div>

<div id="red"></div>
<div class="abs" style="left:0;top:1479px;width:26px;height:26px;z-index:10;background:radial-gradient(circle at 100% 0,rgba(90,143,125,0) 25.3px,#5f9483 26.3px)"></div>
<div class="abs" style="left:2549px;top:1499px;width:11px;height:6px;z-index:10;background:#3a3a3a;clip-path:polygon(100% 0,100% 100%,0 100%,45% 62%)"></div>
</div>
</body>
</html>
